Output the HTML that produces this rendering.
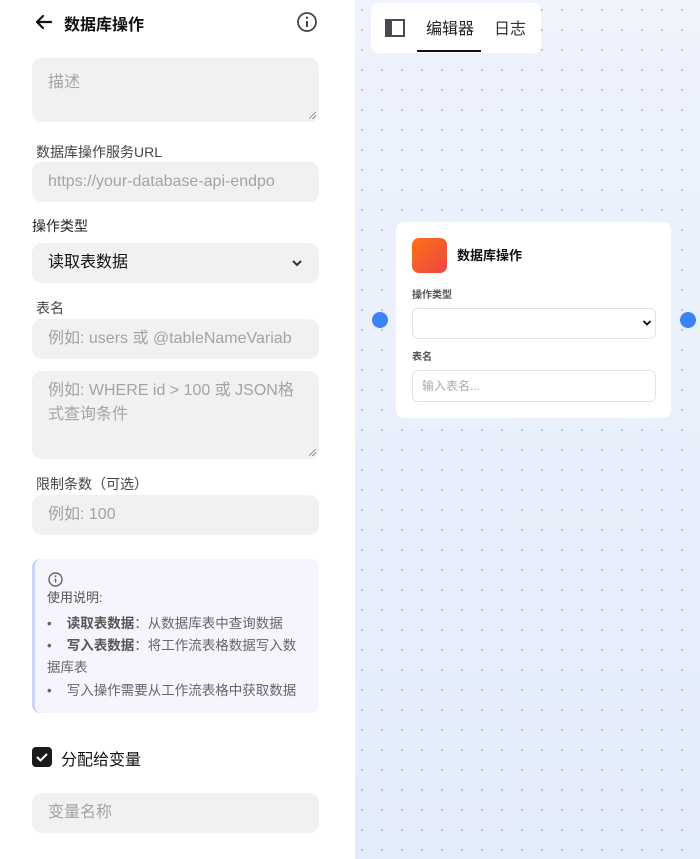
<!DOCTYPE html>
<html><head><meta charset="utf-8"><style>
*{box-sizing:border-box;margin:0;padding:0}
body{width:700px;height:859px;overflow:hidden;position:relative;font-family:"Liberation Sans","Noto Sans CJK SC",sans-serif;background:#fff}
.a{position:absolute}
.left{left:0;top:0;width:355px;height:859px;background:#fff}
.right{left:355px;top:0;width:345px;height:859px;
background-image:radial-gradient(circle,#a9b4c4 0.8px,transparent 1.1px),linear-gradient(180deg,#eef3fc,#e3ecfb);
background-size:20px 20px,100% 100%;background-position:-3px 0px,0 0}
.in{position:absolute;left:32px;width:287px;background:#f1f1f1;border-radius:10px;color:#a3a3a8;font-size:16px;padding-left:16px}
.lbl{position:absolute;font-size:14px;color:#444}
.grip{position:absolute;right:3px;bottom:3px;width:7px;height:7px;background:linear-gradient(135deg,transparent 45%,#777 46%,#777 52%,transparent 53%,transparent 70%,#777 71%,#777 78%,transparent 79%)}
</style></head><body>
<div class="a left">
<svg class="a" style="left:34px;top:12px" width="20" height="20" viewBox="0 0 20 20"><path d="M17 10H3M9 4L3 10l6 6" fill="none" stroke="#111" stroke-width="2.2" stroke-linecap="round" stroke-linejoin="round"/></svg>
<div class="a" style="left:64px;top:11px;font-size:16px;font-weight:bold;color:#111">数据库操作</div>
<svg class="a" style="left:296px;top:11px" width="22" height="22" viewBox="0 0 22 22"><circle cx="11" cy="11" r="9" fill="none" stroke="#444" stroke-width="1.8"/><path d="M11 10v6" stroke="#444" stroke-width="2"/><circle cx="11" cy="6.7" r="1.2" fill="#444"/></svg>
<div class="in" style="top:58px;height:64px;padding-top:10px">描述<div class="grip"></div></div>
<div class="lbl" style="left:36px;top:142px">数据库操作服务URL</div>
<div class="in" style="top:162px;height:40px;line-height:40px">https://your-database-api-endpo</div>
<div class="lbl" style="left:32px;top:216px;color:#222">操作类型</div>
<div class="in" style="top:243px;height:40px;line-height:40px;color:#111">读取表数据
<svg class="a" style="right:16px;top:15px" width="12" height="10" viewBox="0 0 12 10"><path d="M2 3l4 4 4-4" fill="none" stroke="#333" stroke-width="2"/></svg></div>
<div class="lbl" style="left:36px;top:298px">表名</div>
<div class="in" style="top:319px;height:40px;line-height:40px">例如: users 或 @tableNameVariab</div>
<div class="in" style="top:371px;height:88px;padding-top:8px;line-height:24px;padding-right:18px">例如: WHERE id &gt; 100 或 JSON格式查询条件<div class="grip"></div></div>
<div class="lbl" style="left:36px;top:474px">限制条数（可选）</div>
<div class="in" style="top:495px;height:40px;line-height:40px">例如: 100</div>
<div class="a" style="left:32px;top:559px;width:287px;height:154px;background:#f5f6fd;border-left:3px solid #ccd3f6;border-radius:8px;padding:10px 12px;font-size:13.5px;color:#666">
<svg width="17" height="17" viewBox="0 0 17 17" style="display:block;margin-top:2px"><circle cx="8.5" cy="8.5" r="6.5" fill="none" stroke="#666" stroke-width="1.4"/><path d="M8.5 7.5v4" stroke="#666" stroke-width="1.5"/><circle cx="8.5" cy="5.2" r=".9" fill="#666"/></svg>
<div style="margin-top:-1px;color:#555;font-size:13px">使用说明:</div>
<div style="margin-top:6px;line-height:23px">•&nbsp;&nbsp;&nbsp;&nbsp;<b style="color:#555">读取表数据</b>：从数据库表中查询数据</div>
<div style="line-height:22px">•&nbsp;&nbsp;&nbsp;&nbsp;<b style="color:#555">写入表数据</b>：将工作流表格数据写入数据库表</div>
<div style="line-height:24px">•&nbsp;&nbsp;&nbsp;&nbsp;写入操作需要从工作流表格中获取数据</div>
</div>
<div class="a" style="left:32px;top:747px;width:20px;height:20px;background:#1a1a1a;border-radius:4px"><svg width="20" height="20" viewBox="0 0 20 20"><path d="M5 10l3.5 3.5L15 7" fill="none" stroke="#fff" stroke-width="2"/></svg></div>
<div class="a" style="left:61px;top:746px;font-size:16px;color:#111">分配给变量</div>
<div class="in" style="top:793px;height:40px;line-height:40px">变量名称</div>
</div>
<div class="a right"></div>
<div class="a" style="left:371px;top:3px;width:170px;height:50px;background:#fff;border-radius:8px"></div>
<svg class="a" style="left:385px;top:19px" width="20" height="18" viewBox="0 0 20 18"><rect x="1" y="1" width="18" height="16" fill="none" stroke="#4a4a55" stroke-width="2"/><rect x="1" y="1" width="6" height="16" fill="#4a4a55"/></svg>
<div class="a" style="left:426px;top:15px;font-size:16px;color:#222">编辑器</div>
<div class="a" style="left:417px;top:50px;width:64px;height:2px;background:#111"></div>
<div class="a" style="left:494px;top:15px;font-size:16px;color:#333">日志</div>
<div class="a" style="left:396px;top:222px;width:275px;height:196px;background:#fff;border-radius:8px"></div>
<div class="a" style="left:412px;top:238px;width:35px;height:35px;border-radius:7px;background:linear-gradient(135deg,#f97316,#ef4444)"></div>
<div class="a" style="left:457px;top:245px;font-size:13px;font-weight:bold;color:#111">数据库操作</div>
<div class="a" style="left:412px;top:286px;font-size:10px;font-weight:bold;color:#555">操作类型</div>
<div class="a" style="left:412px;top:308px;width:244px;height:31px;border:1px solid #e3e3e6;border-radius:6px"><svg class="a" style="right:3px;top:10px" width="10" height="8" viewBox="0 0 10 8"><path d="M1.5 2l3.5 3.5L8.5 2" fill="none" stroke="#111" stroke-width="1.8"/></svg></div>
<div class="a" style="left:412px;top:348px;font-size:10px;font-weight:bold;color:#555">表名</div>
<div class="a" style="left:412px;top:370px;width:244px;height:32px;border:1px solid #e3e3e6;border-radius:6px;font-size:12px;color:#aaa;padding-left:9px;line-height:30px">输入表名...</div>
<div class="a" style="left:372px;top:312px;width:16px;height:16px;border-radius:50%;background:#3b82f6"></div>
<div class="a" style="left:680px;top:312px;width:16px;height:16px;border-radius:50%;background:#3b82f6"></div>
</body></html>
